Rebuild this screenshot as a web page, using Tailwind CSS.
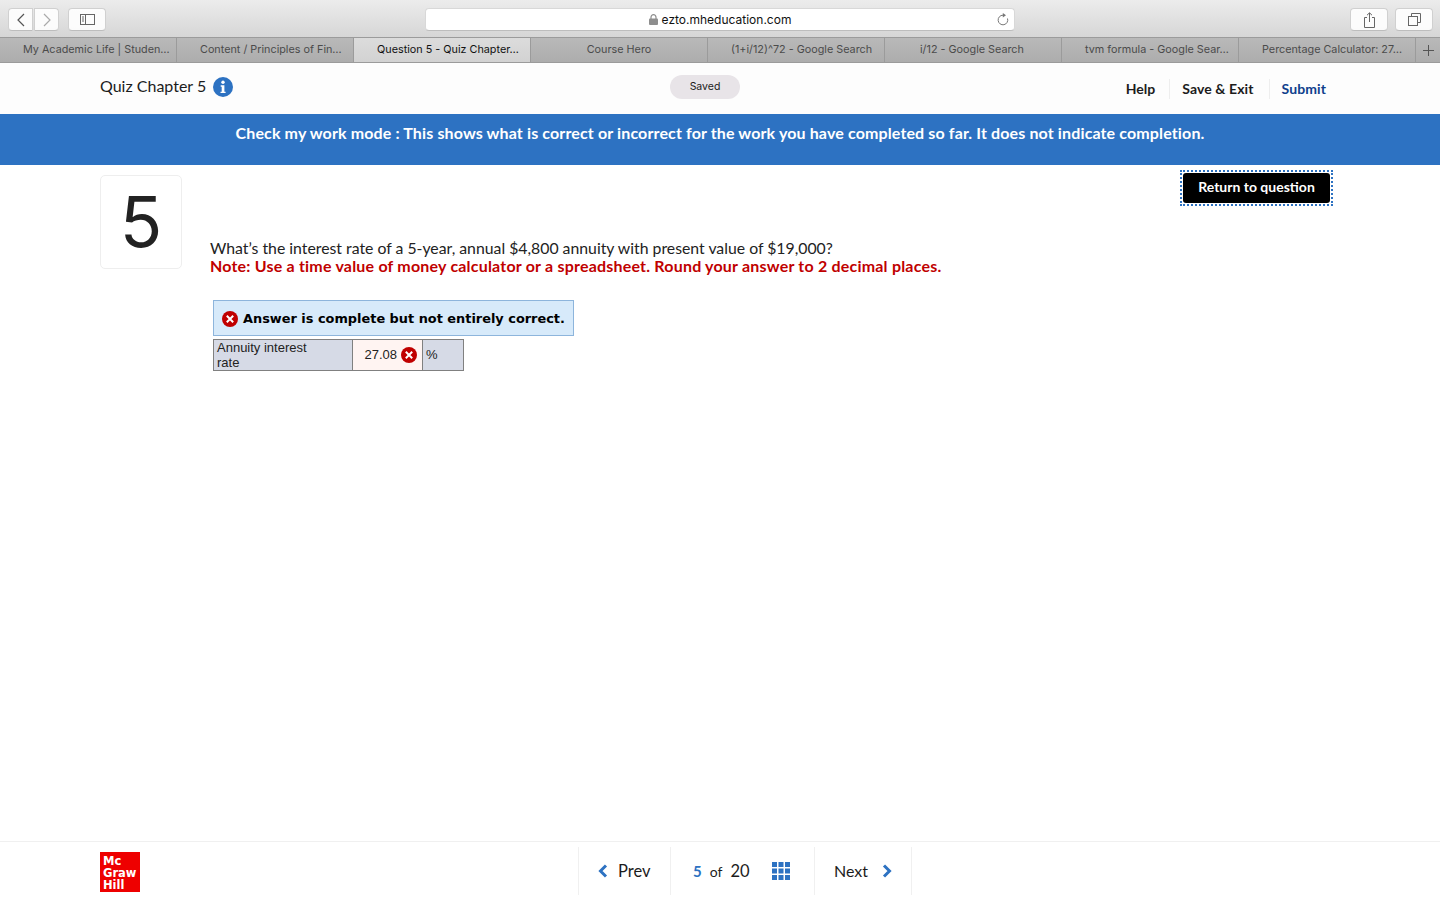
<!DOCTYPE html>
<html>

<head>
    <meta charset="utf-8">
    <title>Question 5 - Quiz Chapter 5</title>
    <script src="https://cdn.jsdelivr.net/npm/@tailwindcss/browser@4"></script>
</head>

<body class="bg-white h-screen overflow-hidden flex flex-col font-['Lato','Open_Sans',sans-serif] text-[#1c1c1c]">
    <!-- safari toolbar -->
    <div class="h-[37px] shrink-0 flex items-center bg-gradient-to-b from-[#ececec] to-[#d6d6d6] pl-[8px] pr-[7px] pt-[2px] font-['Inter',sans-serif]">
        <div class="flex gap-[1px]">
            <button class="w-[25px] h-[23px] bg-white/90 rounded-l-[4px] border border-[#d0d0d0] border-b-[#bdbdbd] flex items-center justify-center">
                <svg width="10" height="14" viewBox="0 0 10 14" fill="none" stroke="#555" stroke-width="1.2"><path d="M8 1 2 7l6 6"/></svg>
            </button>
            <button class="w-[25px] h-[23px] bg-white/90 rounded-r-[4px] border border-[#d0d0d0] border-b-[#bdbdbd] flex items-center justify-center">
                <svg width="10" height="14" viewBox="0 0 10 14" fill="none" stroke="#aaa" stroke-width="1.2"><path d="M2 1l6 6-6 6"/></svg>
            </button>
        </div>
        <button class="ml-[9px] w-[38px] h-[23px] bg-white/90 rounded-[4px] border border-[#d0d0d0] border-b-[#bdbdbd] flex items-center justify-center">
            <svg width="15" height="11" viewBox="0 0 15 11" fill="none" stroke="#666"><rect x=".5" y=".5" width="14" height="10"/><path d="M5.5 .5v10M2 3h2M2 5h2M2 7h2"/></svg>
        </button>
        <div class="ml-[319px] w-[590px] h-[23px] bg-white rounded-[4px] border border-[#d8d8d8] border-b-[#bdbdbd] relative flex items-center justify-center text-[12px] text-[#111]">
            <svg class="mr-[4px]" width="9" height="11" viewBox="0 0 9 11"><path d="M2 5V3.2a2.5 2.5 0 0 1 5 0V5" fill="none" stroke="#8e8e8e" stroke-width="1.2"/><rect y="4.5" width="9" height="6.5" rx="1" fill="#8e8e8e"/></svg>
            <span>ezto.mheducation.com</span>
            <svg class="absolute right-[5px] top-[4px]" width="13" height="13" viewBox="0 0 13 13" fill="none" stroke="#777" stroke-width="1"><path d="M7 2.2a4.8 4.8 0 1 0 4.5 3.3"/><path d="M6.8 0v4.4L10 2.2z" fill="#777" stroke="none"/></svg>
        </div>
        <button class="ml-auto w-[38px] h-[23px] bg-white/90 rounded-[4px] border border-[#d0d0d0] border-b-[#bdbdbd] flex items-center justify-center">
            <svg width="13" height="16" viewBox="0 0 13 16" fill="none" stroke="#666"><path d="M4 5.5H1.5v10h10v-10H9M6.5 10V1M4 3.2 6.5 .8 9 3.2"/></svg>
        </button>
        <button class="ml-[7px] w-[38px] h-[23px] bg-white/90 rounded-[4px] border border-[#d0d0d0] border-b-[#bdbdbd] flex items-center justify-center">
            <svg width="13" height="13" viewBox="0 0 13 13" fill="none" stroke="#666"><rect x=".5" y="3.5" width="9" height="9"/><path d="M3.5 3.5v-3h9v9h-3"/></svg>
        </button>
    </div>

    <!-- tabs -->
    <div class="h-[26px] shrink-0 flex bg-gradient-to-b from-[#b9b9b9] to-[#adadad] border-y border-[#9b9b9b] text-[10.8px] text-[#4b4b4b] font-['Inter',sans-serif]">
        <div class="w-[177px] pl-[23px] border-r border-[#9b9b9b] flex items-center whitespace-nowrap">My Academic Life | Studen…</div>
        <div class="w-[177px] pl-[23px] border-r border-[#9b9b9b] flex items-center whitespace-nowrap">Content / Principles of Fin…</div>
        <div class="w-[177px] pl-[23px] border-r border-[#9b9b9b] flex items-center whitespace-nowrap bg-gradient-to-b from-[#dcdcdc] to-[#d2d2d2] text-[#111]">Question 5 - Quiz Chapter…</div>
        <div class="w-[177px] border-r border-[#9b9b9b] flex items-center justify-center whitespace-nowrap">Course Hero</div>
        <div class="w-[177px] pl-[23px] border-r border-[#9b9b9b] flex items-center whitespace-nowrap">(1+i/12)^72 - Google Search</div>
        <div class="w-[177px] pl-[35px] border-r border-[#9b9b9b] flex items-center whitespace-nowrap">i/12 - Google Search</div>
        <div class="w-[177px] pl-[23px] border-r border-[#9b9b9b] flex items-center whitespace-nowrap">tvm formula - Google Sear…</div>
        <div class="w-[177px] pl-[23px] border-r border-[#9b9b9b] flex items-center whitespace-nowrap">Percentage Calculator: 27…</div>
        <div class="flex-1 flex items-center justify-center">
            <svg width="11" height="11" viewBox="0 0 11 11" stroke="#555"><path d="M5.5 0v11M0 5.5h11"/></svg>
        </div>
    </div>

    <!-- quiz header -->
    <header class="h-[51px] shrink-0 bg-[#fdfdfd] pl-[100px] pr-[114px] flex items-center relative">
        <div class="flex items-center gap-[7px] mb-[3px]">
            <span class="text-[16px] mb-[2px]">Quiz Chapter 5</span>
            <svg width="20" height="20" viewBox="0 0 20 20"><circle cx="10" cy="10" r="10" fill="#2d72c2"/><circle cx="10" cy="5.2" r="1.7" fill="#fff"/><path d="M7.7 8.3h3.7v6.4h1.2v1.4H7.5v-1.4h1.2v-5H7.7z" fill="#fff"/></svg>
        </div>
        <div class="absolute left-[670px] top-[12px] w-[70px] h-[24px] rounded-full bg-[#e8e4e8] flex items-center justify-center text-[10.5px] pb-[1px] font-['Inter',sans-serif]">Saved</div>
        <nav class="ml-auto flex items-center text-[14px] font-bold">
            <a class="pr-[14px] border-r border-[#eeeeee] leading-[20px]">Help</a>
            <a class="pl-[12px] pr-[15px] tracking-[.1px] border-r border-[#eeeeee] leading-[20px]">Save &amp; Exit</a>
            <a class="pl-[12px] tracking-[.1px] leading-[20px] text-[#0f3f8c]">Submit</a>
        </nav>
    </header>

    <!-- check my work banner -->
    <div class="h-[51px] shrink-0 bg-[#2d72c2] text-white font-bold text-[16px] tracking-[.13px] text-center pt-[9px] leading-[20px] whitespace-nowrap">
        Check my work mode : This shows what is correct or incorrect for the work you have completed so far. It does not indicate completion.
    </div>

    <main class="flex-1 pl-[100px] pr-[107px] flex items-start relative">
        <div class="mt-[10px] w-[82px] h-[94px] shrink-0 border border-[#eeeeee] rounded-[5px] flex items-center justify-center text-[70px] font-['Inter',sans-serif] font-normal leading-none text-[#222]">5</div>
        <div class="ml-[28px] mt-[74px]">
            <p class="text-[15.8px] leading-[18px] text-[#222]">What’s the interest rate of a 5-year, annual $4,800 annuity with present value of $19,000?</p>
            <p class="text-[16px] tracking-[.2px] leading-[18px] font-bold text-[#c00000]">Note: Use a time value of money calculator or a spreadsheet. Round your answer to 2 decimal places.</p>

            <div class="ml-[3px] mt-[25px] w-[361px] h-[36px] bg-[#d7eafa] border border-[#8db5dc] flex items-center pl-[8px] pt-[1px] font-['DejaVu_Sans',sans-serif] font-bold text-[12.9px] text-black whitespace-nowrap">
                <svg class="mr-[5px] shrink-0" width="16" height="16" viewBox="0 0 16 16"><circle cx="8" cy="8" r="8" fill="#c00000"/><path d="M4.8 4.8l6.4 6.4M11.2 4.8l-6.4 6.4" stroke="#fff" stroke-width="2"/></svg>
                Answer is complete but not entirely correct.
            </div>
            <div class="ml-[3px] mt-[3px] w-[251px] h-[32px] flex border border-[#808080] font-['Liberation_Sans',sans-serif] text-[13px] text-[#222]">
                <div class="w-[139px] bg-[#d6dae6] border-r border-[#808080] pl-[3px] leading-[15px] flex items-center">Annuity interest<br>rate</div>
                <div class="w-[70px] bg-[#fff4f2] border-r border-[#808080] flex items-center justify-end pr-[5px] gap-[4px]">
                    27.08
                    <svg width="16" height="16" viewBox="0 0 16 16"><circle cx="8" cy="8" r="8" fill="#c00000"/><path d="M4.8 4.8l6.4 6.4M11.2 4.8l-6.4 6.4" stroke="#fff" stroke-width="2"/></svg>
                </div>
                <div class="flex-1 bg-[#d6dae6] pl-[3px] flex items-center">%</div>
            </div>
        </div>
        <button class="absolute left-[1180px] top-[5px] w-[153px] h-[36px] border-2 border-dotted border-[#2d72c2] p-[1px]">
            <span class="h-full rounded-[3px] bg-black text-white font-bold text-[14px] pb-[3px] flex items-center justify-center">Return to question</span>
        </button>
    </main>

    <!-- footer nav -->
    <footer class="h-[59px] shrink-0 border-t border-[#f0f0f0] relative">
        <div class="absolute left-[100px] top-[10px] w-[40px] h-[40px] bg-[#ee0000] text-white font-['DejaVu_Sans',sans-serif] font-bold text-[11.5px] leading-[12px] pl-[3px] pt-[3px]">Mc<br>Graw<br>Hill</div>
        <div class="absolute left-[578px] top-[5px] h-[48px] flex text-[#1c1c1c]">
            <a class="w-[93px] border-x border-[#f0f0f0] flex items-center pl-[19px] gap-[10px] text-[16.5px]">
                <svg width="10" height="14" viewBox="0 0 10 14" fill="none" stroke="#2d72c2" stroke-width="3"><path d="M8 1.5 2.5 7 8 12.5"/></svg>
                Prev
            </a>
            <div class="w-[144px] flex items-center pl-[22px] border-r border-[#f0f0f0]">
                <span class="text-[#2d72c2] font-bold text-[15px]">5</span>
                <span class="ml-[8px] text-[14px]">of</span>
                <span class="ml-[8px] text-[16.5px]">20</span>
                <svg class="ml-[22px]" width="18" height="18" viewBox="0 0 18 18" fill="#2d72c2"><path d="M0 0h5v5H0zM6.5 0h5v5h-5zM13 0h5v5h-5zM0 6.5h5v5H0zM6.5 6.5h5v5h-5zM13 6.5h5v5h-5zM0 13h5v5H0zM6.5 13h5v5h-5zM13 13h5v5h-5z"/></svg>
            </div>
            <a class="w-[97px] border-r border-[#f0f0f0] flex items-center pl-[19px] gap-[14px] text-[16px]">
                Next
                <svg width="10" height="14" viewBox="0 0 10 14" fill="none" stroke="#2d72c2" stroke-width="3"><path d="M2 1.5 7.5 7 2 12.5"/></svg>
            </a>
        </div>
    </footer>
</body>

</html>
